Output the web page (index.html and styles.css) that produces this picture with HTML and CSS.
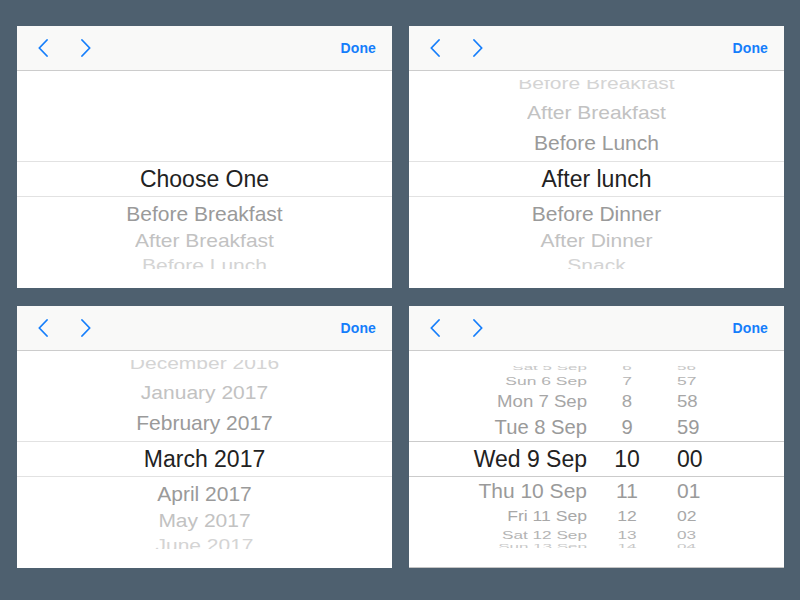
FILE: index.html
```html
<!DOCTYPE html>
<html>
<head>
<meta charset="utf-8">
<link rel="stylesheet" href="styles.css">
</head>
<body>
<div class="screen">

  <section class="panel">
    <header class="toolbar">
      <svg class="chev" viewBox="0 0 10 18"><polyline points="9,1 1.3,9 9,17"/></svg>
      <svg class="chev" viewBox="0 0 10 18"><polyline points="1,1 8.7,9 1,17"/></svg>
      <span class="done">Done</span>
    </header>
    <div class="picker">
      <div class="above"></div>
      <div class="band">Choose One</div>
      <div class="below">
        <div class="row b1">Before Breakfast</div>
        <div class="row b2">After Breakfast</div>
        <div class="row b3">Before Lunch</div>
      </div>
    </div>
  </section>

  <section class="panel">
    <header class="toolbar">
      <svg class="chev" viewBox="0 0 10 18"><polyline points="9,1 1.3,9 9,17"/></svg>
      <svg class="chev" viewBox="0 0 10 18"><polyline points="1,1 8.7,9 1,17"/></svg>
      <span class="done">Done</span>
    </header>
    <div class="picker">
      <div class="above">
        <div class="row a3">Before Breakfast</div>
        <div class="row a2">After Breakfast</div>
        <div class="row a1">Before Lunch</div>
      </div>
      <div class="band">After lunch</div>
      <div class="below">
        <div class="row b1">Before Dinner</div>
        <div class="row b2">After Dinner</div>
        <div class="row b3">Snack</div>
      </div>
    </div>
  </section>

  <section class="panel">
    <header class="toolbar">
      <svg class="chev" viewBox="0 0 10 18"><polyline points="9,1 1.3,9 9,17"/></svg>
      <svg class="chev" viewBox="0 0 10 18"><polyline points="1,1 8.7,9 1,17"/></svg>
      <span class="done">Done</span>
    </header>
    <div class="picker">
      <div class="above">
        <div class="row a3">December 2016</div>
        <div class="row a2">January 2017</div>
        <div class="row a1">February 2017</div>
      </div>
      <div class="band">March 2017</div>
      <div class="below">
        <div class="row b1">April 2017</div>
        <div class="row b2">May 2017</div>
        <div class="row b3">June 2017</div>
      </div>
    </div>
  </section>

  <section class="panel panel-last">
    <header class="toolbar">
      <svg class="chev" viewBox="0 0 10 18"><polyline points="9,1 1.3,9 9,17"/></svg>
      <svg class="chev" viewBox="0 0 10 18"><polyline points="1,1 8.7,9 1,17"/></svg>
      <span class="done">Done</span>
    </header>
    <div class="picker">
      <div class="above dt-above">
        <div class="trow ta4"><span class="d">Sat 5 Sep</span><span class="h">6</span><span class="m">56</span></div>
        <div class="trow ta3"><span class="d">Sun 6 Sep</span><span class="h">7</span><span class="m">57</span></div>
        <div class="trow ta2"><span class="d">Mon 7 Sep</span><span class="h">8</span><span class="m">58</span></div>
        <div class="trow ta1"><span class="d">Tue 8 Sep</span><span class="h">9</span><span class="m">59</span></div>
      </div>
      <div class="band dt-band">
        <div class="trow tsel"><span class="d">Wed 9 Sep</span><span class="h">10</span><span class="m">00</span></div>
      </div>
      <div class="below dt-below">
        <div class="trow tb1"><span class="d">Thu 10 Sep</span><span class="h">11</span><span class="m">01</span></div>
        <div class="trow tb2"><span class="d">Fri 11 Sep</span><span class="h">12</span><span class="m">02</span></div>
        <div class="trow tb3"><span class="d">Sat 12 Sep</span><span class="h">13</span><span class="m">03</span></div>
        <div class="trow tb4"><span class="d">Sun 13 Sep</span><span class="h">14</span><span class="m">04</span></div>
      </div>
    </div>
  </section>

</div>
</body>
</html>
```

FILE: styles.css
```css
html, body {
  margin: 0;
  padding: 0;
}

body {
  background: #4e606f;
  font-family: "Liberation Sans", Arial, sans-serif;
  width: 800px;
  height: 600px;
  overflow: hidden;
}

.screen {
  display: grid;
  grid-template-columns: 375px 375px;
  column-gap: 17px;
  row-gap: 18px;
  padding: 26px 0 0 17px;
}

.panel {
  background: #ffffff;
  height: 262px;
  display: flex;
  flex-direction: column;
  overflow: hidden;
}

.panel-last {
  height: 261px;
  border-bottom: 1px solid #c4c4c4;
}

.toolbar {
  height: 44px;
  flex: none;
  background: #f9f9f8;
  border-bottom: 1px solid #cccccc;
  display: flex;
  align-items: center;
  padding: 0 16px 0 21px;
}

.chev {
  width: 10px;
  height: 18px;
  fill: none;
  stroke: #157efb;
  stroke-width: 1.8;
  stroke-linecap: round;
  stroke-linejoin: round;
  margin-right: 33px;
  margin-top: -1px;
}

.done {
  margin-left: auto;
  color: #157efb;
  font-size: 14px;
  font-weight: bold;
  letter-spacing: 0.1px;
}

.picker {
  display: flex;
  flex-direction: column;
}

.above {
  height: 81px;
  margin-top: 9px;
  padding-bottom: 3px;
  box-sizing: border-box;
  overflow: hidden;
  display: flex;
  flex-direction: column;
  justify-content: flex-end;
}

.band {
  height: 34px;
  line-height: 34px;
  border-top: 1px solid #e2e2e2;
  border-bottom: 1px solid #e2e2e2;
  text-align: center;
  font-size: 23px;
  color: #222222;
}

.below {
  height: 72px;
  padding-top: 2px;
  box-sizing: border-box;
  overflow: hidden;
  flex: none;
}

.row {
  text-align: center;
  font-size: 21px;
  white-space: nowrap;
  flex: none;
}

.a1 { height: 30px; line-height: 30px; color: #9a9a9a; }
.a2 { height: 30px; line-height: 30px; color: #c2c2c2; transform: scaleY(0.9); }
.a3 { height: 28px; line-height: 28px; color: #d4d4d4; transform: scaleY(0.78); }

.b1 { height: 30px; line-height: 30px; color: #9a9a9a; }
.b2 { height: 24px; line-height: 24px; color: #c2c2c2; transform: scaleY(0.9); }
.b3 { height: 26px; line-height: 26px; color: #d4d4d4; transform: scaleY(0.78); }

/* date-time picker */
.dt-above {
  height: 75px;
  margin-top: 15px;
  padding-bottom: 0;
}

.dt-band {
  border-color: #cbcbcb;
  text-align: left;
}

.dt-below {
  height: 71px;
  padding-top: 0;
}

.trow {
  display: grid;
  grid-template-columns: 188px 60px 1fr;
  white-space: nowrap;
  flex: none;
}

.trow .d {
  text-align: right;
  padding-right: 10px;
}

.trow .h {
  text-align: center;
}

.trow .m {
  padding-left: 20px;
}

.tsel { height: 34px; line-height: 34px; font-size: 23px; color: #222222; }

.ta1 { height: 27px; line-height: 27px; font-size: 20.2px; color: #9a9a9a; }
.ta2 { height: 25px; line-height: 25px; font-size: 18.6px; color: #a6a6a6; transform: scaleY(0.86); }
.ta3 { height: 15px; line-height: 15px; font-size: 17.5px; color: #b4b4b4; transform: scaleY(0.62); }
.ta4 { height: 12px; line-height: 12px; font-size: 17px; color: #c8c8c8; transform: scaleY(0.38); }

.tb1 { height: 28px; line-height: 28px; font-size: 21px; color: #9a9a9a; }
.tb2 { height: 23px; line-height: 23px; font-size: 17.6px; color: #a8a8a8; transform: scaleY(0.82); }
.tb3 { height: 14px; line-height: 14px; font-size: 17.2px; color: #b4b4b4; transform: scaleY(0.6); }
.tb4 { height: 10px; line-height: 10px; font-size: 17px; color: #c8c8c8; transform: scaleY(0.4); }
```
